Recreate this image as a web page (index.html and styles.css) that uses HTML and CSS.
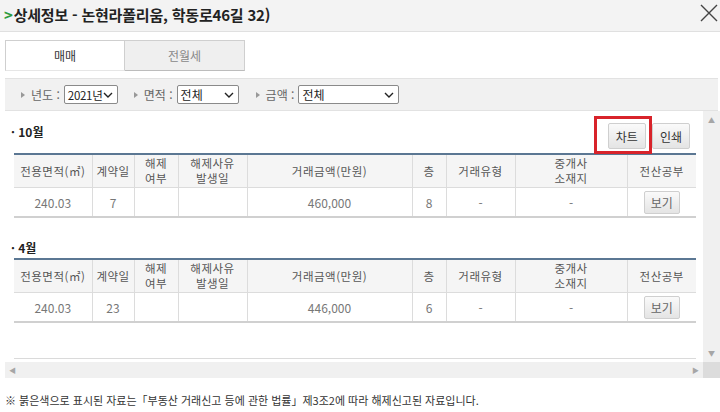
FILE: index.html
```html
<!DOCTYPE html>
<html lang="ko">
<head>
    <meta charset="UTF-8">
    <title>상세정보</title>
    <link rel="stylesheet" href="styles.css">
</head>
<body>
    <div class="header">
        <h1><span class="arrow">&gt;</span>상세정보 - 논현라폴리움, 학동로46길 32)</h1>
        <svg class="close" width="20" height="20" viewBox="0 0 20 20"><path d="M2 2L18 18M18 2L2 18" stroke="#444" stroke-width="1.4" fill="none"/></svg>
    </div>

    <div class="tabs">
        <div class="tab active">매매</div>
        <div class="tab">전월세</div>
    </div>

    <div class="filter">
        <span class="item"><i class="tri"></i>년도 :</span>
        <div class="sel w-year">2021년<svg width="10" height="6" viewBox="0 0 10 6"><path d="M1 1L5 5L9 1" stroke="#222" stroke-width="1.4" fill="none"/></svg></div>
        <span class="item"><i class="tri"></i>면적 :</span>
        <div class="sel w-area">전체<svg width="10" height="6" viewBox="0 0 10 6"><path d="M1 1L5 5L9 1" stroke="#222" stroke-width="1.4" fill="none"/></svg></div>
        <span class="item"><i class="tri"></i>금액 :</span>
        <div class="sel w-price">전체<svg width="10" height="6" viewBox="0 0 10 6"><path d="M1 1L5 5L9 1" stroke="#222" stroke-width="1.4" fill="none"/></svg></div>
    </div>

    <div class="content">
        <div class="main">
            <div class="sec-title first">
                <span>· 10월</span>
                <div class="btns">
                    <span class="mark"><button class="btn">차트</button></span>
                    <button class="btn">인쇄</button>
                </div>
            </div>
            <table class="deal">
                <colgroup>
                    <col class="c1"><col class="c2"><col class="c3"><col class="c4"><col class="c5"><col class="c6"><col class="c7"><col class="c8"><col class="c9">
                </colgroup>
                <tr>
                    <th>전용면적(㎡)</th><th>계약일</th><th>해제<br>여부</th><th>해제사유<br>발생일</th><th>거래금액(만원)</th><th>층</th><th>거래유형</th><th>중개사<br>소재지</th><th>전산공부</th>
                </tr>
                <tr>
                    <td>240.03</td><td>7</td><td></td><td></td><td>460,000</td><td>8</td><td>-</td><td>-</td><td><button class="btn small">보기</button></td>
                </tr>
            </table>

            <div class="sec-title">
                <span>· 4월</span>
            </div>
            <table class="deal">
                <colgroup>
                    <col class="c1"><col class="c2"><col class="c3"><col class="c4"><col class="c5"><col class="c6"><col class="c7"><col class="c8"><col class="c9">
                </colgroup>
                <tr>
                    <th>전용면적(㎡)</th><th>계약일</th><th>해제<br>여부</th><th>해제사유<br>발생일</th><th>거래금액(만원)</th><th>층</th><th>거래유형</th><th>중개사<br>소재지</th><th>전산공부</th>
                </tr>
                <tr>
                    <td>240.03</td><td>23</td><td></td><td></td><td>446,000</td><td>6</td><td>-</td><td>-</td><td><button class="btn small">보기</button></td>
                </tr>
            </table>
            <div class="end-line"></div>
        </div>
        <div class="vscroll"><span class="up">▲</span><span class="down">▼</span></div>
        <div class="hscroll"><span>◀</span><span>▶</span></div>
        <div class="corner"></div>
    </div>

    <p class="note">※ 붉은색으로 표시된 자료는「부동산 거래신고 등에 관한 법률」제3조2에 따라 해제신고된 자료입니다.</p>
</body>
</html>
```

FILE: styles.css
```css
body { margin: 0; width: 720px; height: 412px; overflow: hidden; background: #fff; font-family: "Noto Sans CJK KR", "Noto Sans", sans-serif; color: #333; }

.header { height: 31px; background: #f3f3f3; border-bottom: 1px solid #e0e0e0; display: flex; align-items: center; justify-content: space-between; padding: 0 1px 0 4px; }
.header h1 { margin: 0; font-size: 15px; font-weight: bold; color: #222; letter-spacing: -0.2px; margin-top: -2px; }
.header .arrow { color: #2e9b3f; font-weight: bold; margin-right: 1px; }
.close { margin-top: -6px; }

.tabs { display: flex; margin: 8px 0 0 5px; height: 30px; }
.tab { width: 118px; height: 29px; line-height: 29px; text-align: center; font-size: 12px; color: #888; background: #efefef; border: 1px solid #cfcfcf; border-bottom: 1px solid #bcbcbc; }
.tab.active { background: #fff; color: #333; border-bottom-color: #e6e6e6; }
.tab + .tab { width: 119px; border-left: none; }

.filter { margin: 8px 2px 0 5px; height: 31px; background: #f1f1f1; border-top: 1px solid #e2e2e2; border-bottom: 1px solid #e2e2e2; display: flex; align-items: center; padding-left: 16px; font-size: 12px; color: #666; }
.item { display: flex; align-items: center; margin-right: 4px; white-space: nowrap; }
.tri { display: inline-block; width: 0; height: 0; border-left: 4px solid #999; border-top: 3.5px solid transparent; border-bottom: 3.5px solid transparent; margin-right: 6px; }
.sel { flex-shrink: 0; white-space: nowrap; height: 17px; border: 1px solid #8a8a8a; border-radius: 2px; background: #fff; color: #222; display: flex; align-items: center; justify-content: space-between; padding: 0 4px 0 3px; margin-right: 16px; font-size: 12px; }
.w-year { width: 45px; font-size: 11.5px; letter-spacing: -0.3px; }
.w-area { width: 53px; margin-right: 17px; }
.w-price { width: 92px; }

.content { margin-left: 5px; height: 267px; display: grid; grid-template-columns: 1fr 17px; grid-template-rows: 251px 16px; }
.main { padding-left: 9px; overflow: hidden; }
.sec-title { display: flex; justify-content: space-between; align-items: center; width: 682px; height: 22px; margin-top: 18px; font-size: 12px; font-weight: bold; color: #222; }
.sec-title span { margin-left: -3px; }
.sec-title.first { height: 26px; margin-top: 12px; margin-bottom: 4px; align-items: flex-start; }
.btns { display: flex; gap: 6px; margin-right: 6px; }
.mark { position: relative; }
.mark::after { content: ""; position: absolute; left: -14px; top: -7px; width: 52px; height: 32px; border: 3px solid #d8232a; }

.btn { font-family: inherit; font-size: 12px; color: #333; height: 26px; padding: 0 7px; border: 1px solid #cfcfcf; border-radius: 2px; background: linear-gradient(#fafafa, #e4e4e4); }
.btn.small { height: 23px; padding: 0 6px; color: #666; }

.deal { width: 682px; border-collapse: collapse; border-top: 2px solid #5b7793; border-bottom: 2px solid #d0d0d0; font-size: 12px; table-layout: fixed; }
.deal th { height: 32px; padding: 0; background: #f5f5f5; color: #555; font-weight: normal; font-size: 11.5px; line-height: 15px; letter-spacing: 0.5px; border: 1px solid #dcdcdc; border-top: none; white-space: nowrap; }
.deal td { height: 28px; text-align: center; color: #777; border: 1px solid #dcdcdc; border-bottom: none; padding: 0; }
.deal tr > :first-child { border-left: none; }
.deal tr > :last-child { border-right: none; }
.c1 { width: 78px; } .c2 { width: 42px; } .c3 { width: 44px; } .c4 { width: 69px; } .c5 { width: 165px; }
.c6 { width: 34px; } .c7 { width: 69px; } .c8 { width: 112px; } .c9 { width: 69px; }

.end-line { width: 682px; margin-top: 35px; border-top: 1px solid #dadada; }

.vscroll { background: #f0f0f0; display: flex; flex-direction: column; justify-content: space-between; align-items: center; font-size: 7px; color: #a6a6a6; padding: 4px 0; }
.hscroll { background: #f0f0f0; display: flex; justify-content: space-between; align-items: center; font-size: 7px; color: #a6a6a6; padding: 0 4px; }
.corner { background: #dcdcdc; }

.note { margin: 14px 0 0 5px; font-size: 11px; color: #333; }
```
